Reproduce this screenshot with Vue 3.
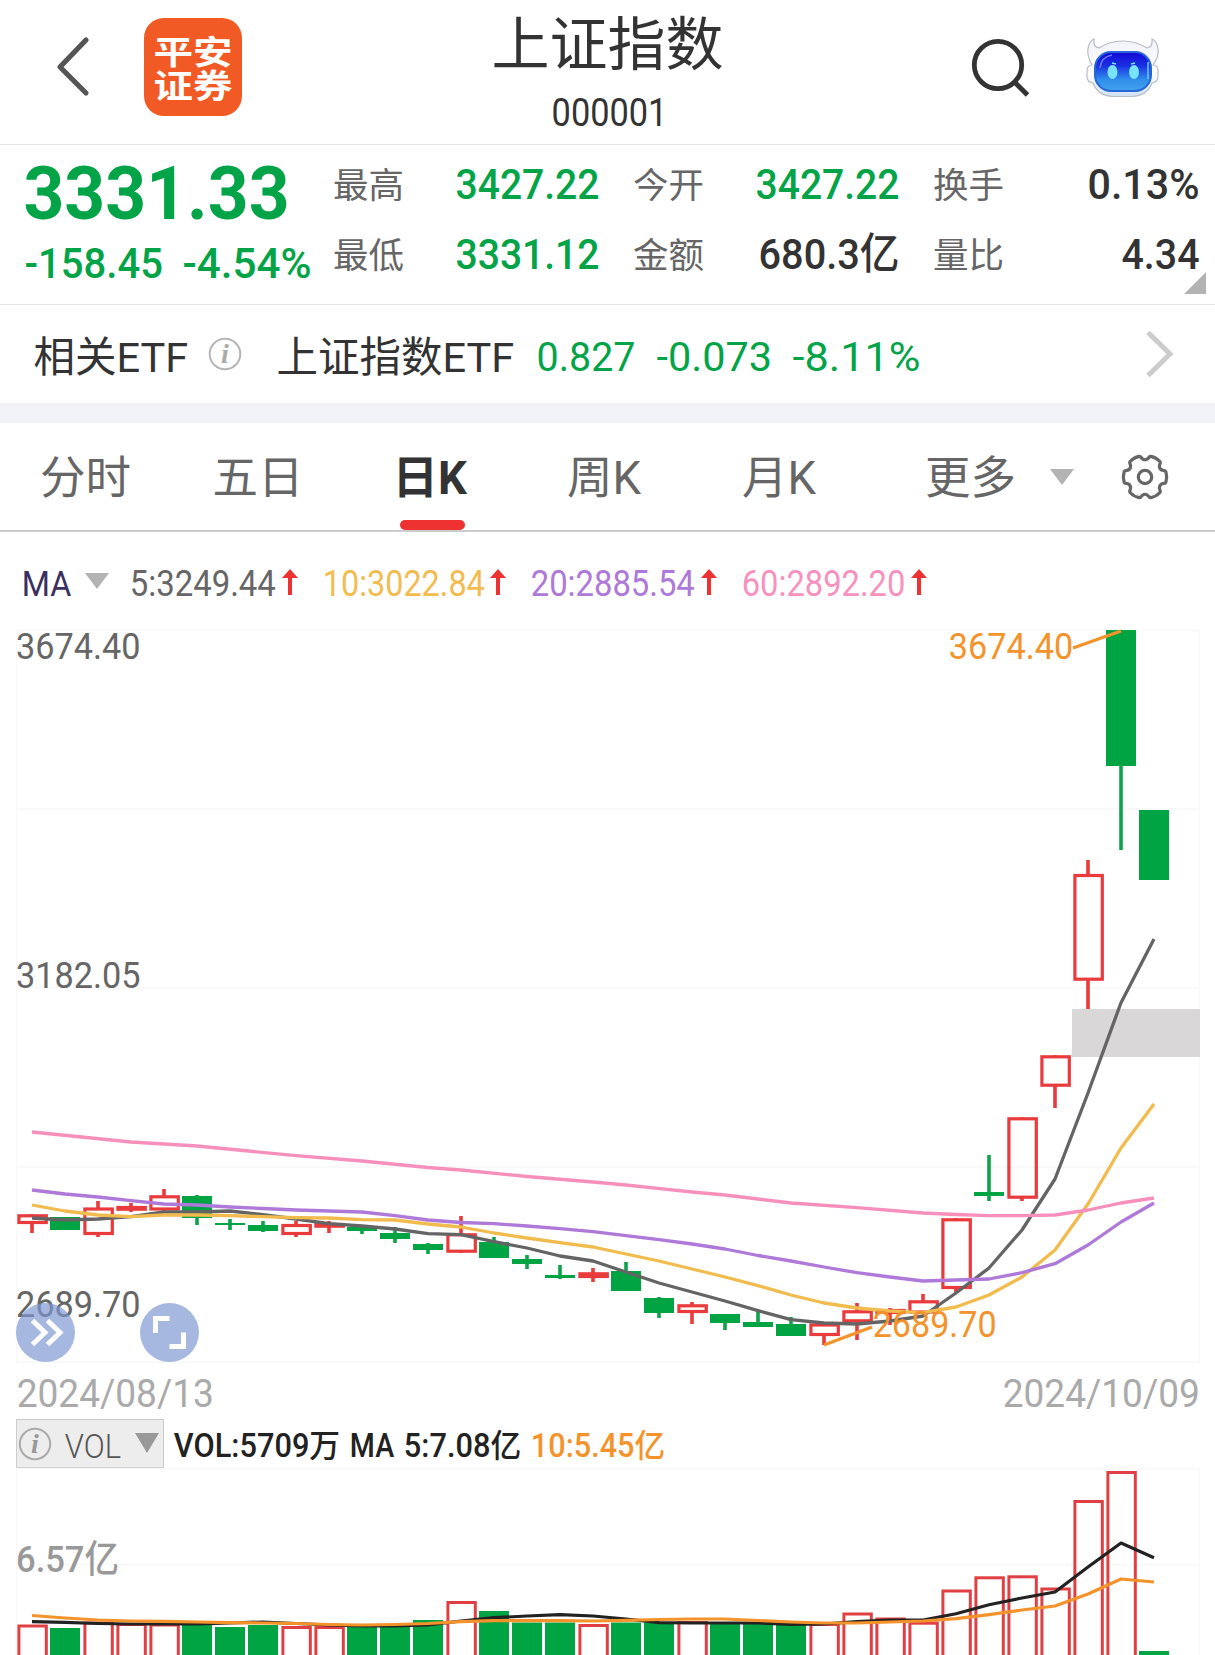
<script setup>

import {h} from "vue";

// Number set to a fixed ink width, baseline at the bottom of its box
const FitText = ({text, w, cap}) => {
  const size = cap / 0.711;
  const pad = size * 0.035;
  return h('svg', {width: w, height: cap, class: 'fit'}, [
    h('text', {
      x: -pad,
      y: cap,
      'font-size': size,
      textLength: w + pad * 2,
      lengthAdjust: 'spacingAndGlyphs',
      fill: 'currentColor'
    }, text)
  ]);
};
FitText.props = ['text', 'w', 'cap'];

const stats = [
  {label: '最高', value: '3427.22', w: 141, green: true},
  {label: '今开', value: '3427.22', w: 141, green: true},
  {label: '换手', value: '0.13%', w: 109},
  {label: '最低', value: '3331.12', w: 141, green: true},
  {label: '金额', value: '680.3亿', w: 138},
  {label: '量比', value: '4.34', w: 75}
];

const tabs = ['分时', '五日', '日K', '周K', '月K', '更多'];
const activeTab = '日K';

const averages = [
  {text: '5:3249.44', w: 143.5, color: '#666666'},
  {text: '10:3022.84', w: 159.5, color: '#f3bc4f'},
  {text: '20:2885.54', w: 161.5, color: '#ae79d8'},
  {text: '60:2892.20', w: 161, color: '#f792be'}
];

// up, body top, body bottom, wick top, wick bottom
const candles = [
  [1, 1214.3, 1224, 1214.3, 1233],
  [0, 1217, 1230, 1217, 1230],
  [1, 1207.5, 1235, 1201, 1237],
  [1, 1206, 1210.7, 1203, 1212],
  [1, 1195.3, 1210.5, 1189, 1210.5],
  [0, 1196, 1218, 1195, 1225],
  [0, 1223, 1225, 1219, 1230],
  [0, 1225, 1231, 1221, 1232],
  [1, 1224, 1235, 1221, 1237],
  [1, 1223, 1227.7, 1221, 1233],
  [0, 1227, 1231, 1226, 1234],
  [0, 1233, 1239, 1227, 1243],
  [0, 1244, 1250, 1243, 1254],
  [1, 1233.3, 1252.7, 1216, 1253],
  [0, 1242, 1258, 1237, 1258],
  [0, 1259, 1264, 1255, 1269],
  [0, 1275, 1278, 1265, 1279],
  [1, 1272.3, 1278, 1268, 1282],
  [0, 1271, 1291, 1262, 1291],
  [0, 1298, 1313, 1297, 1318],
  [1, 1304.3, 1313, 1302, 1324],
  [0, 1314, 1323, 1314, 1330],
  [0, 1322, 1327, 1312, 1327],
  [0, 1324, 1336, 1317, 1336],
  [1, 1323.5, 1336, 1323.5, 1345],
  [1, 1310.3, 1322.3, 1303, 1340],
  [1, 1309, 1314, 1308, 1325],
  [1, 1300.3, 1313.5, 1294, 1313.5],
  [1, 1218.3, 1289, 1218.3, 1293],
  [0, 1192, 1196, 1155, 1201],
  [1, 1117.3, 1198.7, 1117.3, 1201],
  [1, 1055.3, 1086.7, 1055.3, 1108],
  [1, 874, 980.7, 860, 1009],
  [0, 630, 766, 630, 850],
  [0, 810, 880, 810, 880]
].map(([up, top, bottom, high, low], i) => ({up, top, bottom, high, low, x: 32 + i * 33}));

const volumeTops = [
  1624.5, 1628, 1621.5, 1623, 1623.5, 1624, 1627, 1625, 1626, 1626, 1627, 1627,
  1620, 1601, 1611, 1622.5, 1622.5, 1624, 1622.5, 1622.5, 1621, 1624, 1624, 1624,
  1623, 1612.5, 1617.5, 1621.7, 1589.5, 1576.3, 1575.3, 1587.5, 1500, 1471, 1651
];
// the volume colour differs from the candle on two days
const volumes = volumeTops.map((top, i) => ({top, x: 32 + i * 33, up: candles[i].up || i === 29 || i === 33}));

const toPoints = (ys) => ys.map((y, i) => `${32 + i * 33},${y}`).join(' ');

const ma60 = '32,1132 131,1142 197,1146 296,1155.7 362,1161 428,1167.5 461,1170 527,1176.5 593,1182 626,1185 660,1188.7 692,1192 725,1195 758,1199 791,1203 857,1207.7 923,1213 956,1214.5 989,1215.7 1022,1215.7 1055,1215 1088,1210 1121,1203 1154,1198';
const ma20 = toPoints([
  1190, 1194, 1197, 1200.7, 1204, 1205, 1207, 1208.5, 1210, 1211, 1212, 1215.7,
  1220, 1222.5, 1223.7, 1226, 1228.7, 1231.7, 1235.7, 1239.7, 1244, 1249, 1255.5, 1261,
  1267, 1272.7, 1277, 1281, 1280, 1279, 1272.7, 1263.7, 1245, 1222, 1203
]);
const ma10 = toPoints([
  1205, 1211, 1215, 1216.7, 1215, 1215, 1215.7, 1216.7, 1217.7, 1218, 1219.7, 1220,
  1224, 1227, 1233, 1238, 1242.7, 1247, 1254, 1261, 1269, 1277, 1285.7, 1295,
  1303, 1308, 1311, 1312.7, 1307, 1295, 1277, 1250, 1204, 1148, 1104
]);
const ma5 = toPoints([
  1218, 1220, 1219, 1216.7, 1212, 1212, 1211, 1214.7, 1219, 1223.7, 1226, 1229,
  1233.7, 1234.7, 1241.7, 1248, 1256, 1261, 1272, 1283, 1292, 1301, 1310.7, 1319.7,
  1323, 1324, 1321, 1316, 1293, 1268, 1230, 1179, 1093, 1002.7, 939
]);
const volMa5 = toPoints([
  1621.7, 1622.3, 1623.5, 1624, 1624, 1624, 1623, 1622, 1623.5, 1625, 1626, 1626,
  1625, 1621, 1617.7, 1616, 1614.7, 1616, 1619, 1622.7, 1623, 1623, 1623, 1624.5,
  1624, 1621.7, 1620, 1620, 1613.7, 1604.7, 1598, 1592, 1567, 1543, 1557.7
]);
const volMa10 = toPoints([
  1615.5, 1618, 1620, 1621, 1621.3, 1622, 1622.7, 1623, 1623.5, 1624.5, 1625, 1624.5,
  1623.5, 1621.7, 1620.7, 1620.7, 1620.7, 1621, 1620.3, 1619.5, 1619, 1619, 1620.5, 1622,
  1623, 1623, 1622, 1621, 1618.7, 1614.7, 1610, 1606, 1594, 1579, 1582
]);

const polar = (r, deg) => {
  const a = deg * Math.PI / 180;
  return `${(24 + r * Math.cos(a)).toFixed(2)} ${(24 + r * Math.sin(a)).toFixed(2)}`;
};
const gear = 'M' + polar(21.5, -14) + [0, 60, 120, 180, 240, 300].map(a =>
    ` Q${polar(22.5, a)} ${polar(21.5, a + 14)} L${polar(21, a + 17)} Q${polar(14, a + 30)} ${polar(21, a + 43)} L${polar(21.5, a + 46)}`
).join('') + 'Z';

</script>

<template>
  <main class="app">
    <header class="header">
      <div class="side">
        <svg class="back" width="40" height="64" viewBox="0 0 40 64">
          <path d="M33 8 L7 35 L33 61" fill="none" stroke="#555" stroke-width="5.2" stroke-linecap="round" stroke-linejoin="round"/>
        </svg>
        <svg class="logo" width="98" height="98" viewBox="0 0 98 98">
          <rect width="98" height="98" rx="20" fill="#f15a24"/>
          <g fill="#fff" font-size="33" font-weight="700" transform="translate(9.5 0)">
            <text x="0" y="46" textLength="79" lengthAdjust="spacingAndGlyphs">平安</text>
            <text x="0" y="79.5" textLength="79" lengthAdjust="spacingAndGlyphs">证券</text>
          </g>
        </svg>
      </div>
      <div class="title">
        <h1>上证指数</h1>
        <FitText class="code" text="000001" :w="113" :cap="28"/>
      </div>
      <div class="side right">
        <svg width="60" height="62" viewBox="0 0 60 62">
          <circle cx="28" cy="29" r="23.7" fill="none" stroke="#333" stroke-width="4.8"/>
          <path d="M44 45.5 L57.5 59" stroke="#333" stroke-width="5"/>
        </svg>
        <svg class="robot" width="74" height="60" viewBox="0 0 74 60">
          <defs>
            <linearGradient id="face" x1="0" y1="0" x2="0" y2="1">
              <stop offset="0" stop-color="#1208d6"/>
              <stop offset="0.35" stop-color="#1a2fe2"/>
              <stop offset="0.7" stop-color="#2f8dec"/>
              <stop offset="1" stop-color="#45a4ec"/>
            </linearGradient>
            <linearGradient id="shell" x1="0" y1="0" x2="0" y2="1">
              <stop offset="0" stop-color="#f1f2f8"/>
              <stop offset="0.6" stop-color="#ffffff"/>
              <stop offset="1" stop-color="#d0e2f4"/>
            </linearGradient>
          </defs>
          <path d="M8 1 C3 3 0 12 3 20 Q4 24 6 27 Q1 27 1 33 V39 Q1 44 7 45 Q12 58 27 58.5 H46 Q61 58 66 45 Q72 44 72 39 V33 Q72 27 67 27 Q69 24 71 20 C74 12 71 3 66 1 Q67 9 61 10 Q50 3 37 3 Q23 3 13 10 Q7 9 8 1 Z" fill="url(#shell)" stroke="#b9bcc9" stroke-width="1.2"/>
          <rect x="9" y="14" width="56" height="39" rx="16" fill="url(#face)" stroke="#2767d8" stroke-width="2"/>
          <path d="M14 30 Q15 19 26 17" fill="none" stroke="#6974f2" stroke-width="1.6"/>
          <path d="M62 24 V41" stroke="#67c9f3" stroke-width="1.5"/>
          <ellipse cx="26.5" cy="34" rx="5" ry="7" fill="#79e3fb"/>
          <ellipse cx="48" cy="34" rx="5" ry="7" fill="#79e3fb"/>
          <path d="M26 25 l4 1 M45 26 l4 -1" stroke="#79e3fb" stroke-width="1.5"/>
        </svg>
      </div>
    </header>

    <section class="quote">
      <div class="price green">
        <FitText class="bold" text="3331.33" :w="261" :cap="53"/>
        <div class="change">
          <FitText class="medium" text="-158.45" :w="135.5" :cap="30.5"/>
          <FitText class="medium" text="-4.54%" :w="126" :cap="30.5"/>
        </div>
      </div>
      <div class="stats">
        <div v-for="stat in stats" :key="stat.label" class="stat">
          <span>{{ stat.label }}</span>
          <FitText class="medium" :class="{green: stat.green}" :text="stat.value" :w="stat.w" :cap="30.5"/>
        </div>
      </div>
      <i class="corner"></i>
    </section>

    <section class="etf">
      <span>相关ETF</span>
      <svg class="icon" width="34" height="34" viewBox="0 0 34 34">
        <circle cx="17" cy="17" r="15.3" fill="none" stroke="#b5b5b5" stroke-width="2"/>
        <text class="serif" x="17" y="26" font-size="28" text-anchor="middle" fill="#aaa">i</text>
      </svg>
      <span class="name">上证指数ETF</span>
      <div class="numbers green">
        <FitText text="0.827" :w="96" :cap="29.5"/>
        <FitText text="-0.073" :w="112.5" :cap="29.5"/>
        <FitText text="-8.11%" :w="125" :cap="29.5"/>
      </div>
      <svg class="icon more" width="30" height="48" viewBox="0 0 30 48">
        <path d="M4 2.5 L26 24 L4 45.5" fill="none" stroke="#ccc" stroke-width="5"/>
      </svg>
    </section>

    <nav class="tabs">
      <a v-for="tab in tabs" :key="tab" :class="{active: tab === activeTab}"><span>{{ tab }}</span></a>
      <i class="arrow-down"></i>
      <svg width="48" height="48" viewBox="0 0 48 48">
        <path :d="gear" fill="none" stroke="#666" stroke-width="3.2" stroke-linejoin="round"/>
        <circle cx="24" cy="24" r="6.7" fill="none" stroke="#666" stroke-width="3.2"/>
      </svg>
    </nav>

    <section class="averages">
      <FitText class="ma" text="MA" :w="47" :cap="25.5"/>
      <i class="arrow-down"></i>
      <div v-for="item in averages" :key="item.text" class="average" :style="{color: item.color}">
        <FitText :text="item.text" :w="item.w" :cap="26.5"/>
        <svg width="16" height="26" viewBox="0 0 16 26">
          <path d="M8 0 L16 9 H10 V26 H6 V9 H0 Z" fill="#ee3131"/>
        </svg>
      </div>
    </section>

    <svg class="chart" width="1215" height="750" viewBox="0 620 1215 750">
      <g fill="none" stroke="#f8f8f8" stroke-width="1.5">
        <rect x="16.5" y="630.5" width="1183" height="731.5"/>
        <path d="M16 809 H1200 M16 988 H1200 M16 1167 H1200"/>
      </g>
      <rect x="1072" y="1009" width="128" height="48" fill="#d9d7d8"/>
      <g v-for="c in candles" :key="c.x">
        <template v-if="c.up">
          <path :d="`M${c.x} ${c.high} V${c.top + 1} M${c.x} ${c.bottom - 1} V${c.low}`" stroke="#e93a3c" stroke-width="3.6"/>
          <rect :x="c.x - 13.1" :y="c.top + 1.5" width="27.4" :height="c.bottom - c.top - 3" fill="none" stroke="#e93a3c" stroke-width="3.2"/>
        </template>
        <template v-else>
          <path :d="`M${c.x} ${c.high} V${c.low}`" stroke="#0da34b" stroke-width="3.6"/>
          <rect :x="c.x - 15" :y="c.top" width="30" :height="c.bottom - c.top" fill="#00a443"/>
        </template>
      </g>
      <g fill="none" stroke-width="3.3" stroke-linejoin="round">
        <polyline :points="ma5" stroke="#646464"/>
        <polyline :points="ma10" stroke="#f1bb4d"/>
        <polyline :points="ma20" stroke="#ae79d8"/>
        <polyline :points="ma60" stroke="#f78fbd"/>
        <path d="M1073 648 L1121 631 M824 1345 L872 1327" stroke="#f4932b"/>
      </g>
      <g font-size="37.5" fill="#666">
        <text x="16" y="658.5" textLength="124.5" lengthAdjust="spacingAndGlyphs">3674.40</text>
        <text x="16" y="987.5" textLength="124.5" lengthAdjust="spacingAndGlyphs">3182.05</text>
        <text x="16" y="1316.5" textLength="124.5" lengthAdjust="spacingAndGlyphs">2689.70</text>
      </g>
      <g font-size="37.5" fill="#f4932b">
        <text x="948.7" y="658.5" textLength="124.5" lengthAdjust="spacingAndGlyphs">3674.40</text>
        <text x="872.7" y="1336.5" textLength="124" lengthAdjust="spacingAndGlyphs">2689.70</text>
      </g>
      <g fill="#7e96d2" fill-opacity="0.68">
        <circle cx="45.5" cy="1332.5" r="29.5"/>
        <circle cx="169.5" cy="1332.5" r="29.5"/>
      </g>
      <g fill="none" stroke="#fff" stroke-width="5">
        <path d="M32.5 1320.5 L45 1332.5 L32.5 1344.5 M47.5 1320.5 L60 1332.5 L47.5 1344.5"/>
        <path d="M155.5 1333 V1318.5 H169.5 M183.5 1332.5 V1346.5 H169.5"/>
      </g>
    </svg>

    <div class="dates">
      <FitText text="2024/08/13" :w="194.5" :cap="27.5"/>
      <FitText text="2024/10/09" :w="194.5" :cap="27.5"/>
    </div>

    <section class="volume">
      <div class="picker">
        <svg width="34" height="34" viewBox="0 0 34 34">
          <circle cx="17" cy="17" r="15.2" fill="none" stroke="#aaa" stroke-width="2"/>
          <text class="serif" x="17" y="26" font-size="28" text-anchor="middle" fill="#999">i</text>
        </svg>
        <FitText class="light vol" text="VOL" :w="54" :cap="23.5"/>
        <i class="arrow-down"></i>
      </div>
      <FitText class="medium" text="VOL:5709万" :w="164" :cap="23"/>
      <FitText class="medium" text="MA" :w="42" :cap="23"/>
      <FitText class="medium" text="5:7.08亿" :w="115" :cap="23"/>
      <FitText class="medium orange" text="10:5.45亿" :w="132" :cap="23"/>
    </section>

    <svg class="chart" width="1215" height="187" viewBox="0 1468 1215 187">
      <g fill="none" stroke="#f8f8f8" stroke-width="1.5">
        <rect x="16.5" y="1468.7" width="1183" height="200"/>
        <path d="M16 1564.5 H1200"/>
      </g>
      <text x="16" y="1571.5" font-size="37.5" font-weight="500" fill="#999" textLength="103" lengthAdjust="spacingAndGlyphs">6.57亿</text>
      <g v-for="v in volumes" :key="v.x">
        <rect v-if="v.up" :x="v.x - 13.1" :y="v.top + 1.5" width="27.4" height="240" fill="none" stroke="#e04043" stroke-width="3"/>
        <rect v-else :x="v.x - 15" :y="v.top" width="30" height="240" fill="#00a443"/>
      </g>
      <g fill="none" stroke-width="3.2" stroke-linejoin="round">
        <polyline :points="volMa5" stroke="#222"/>
        <polyline :points="volMa10" stroke="#f4932b"/>
      </g>
    </svg>
  </main>
</template>

<style>
body {
  margin: 0;
  background: #fff;
}
</style>

<style scoped>

.app {
  width: 1215px;
  height: 1655px;
  overflow: hidden;
  display: flex;
  flex-direction: column;
  background: #fff;
  color: #333;
  font-family: Roboto, "Noto Sans CJK SC", sans-serif;
}

.app > * {
  flex-shrink: 0;
  box-sizing: border-box;
}

svg {
  display: block;
  flex-shrink: 0;
  overflow: visible;
}

.green {
  color: #03a348;
}

.bold {
  font-weight: 700;
}

.medium {
  font-weight: 500;
}

.light {
  font-weight: 300;
}

.orange {
  color: #f4932b;
}

.serif {
  font-family: "Liberation Serif", serif;
  font-style: italic;
  font-weight: 700;
}

.header {
  height: 145px;
  display: grid;
  grid-template-columns: 1fr 240px 1fr;
  border-bottom: 1px solid #e6e6e6;
}

.side {
  display: flex;
  align-items: flex-start;
}

.back {
  margin: 32px 0 0 53px;
}

.logo {
  margin: 18px 0 0 51px;
}

.title {
  display: flex;
  flex-direction: column;
  align-items: center;
  gap: 24px;
  padding-top: 15.5px;
}

.title h1 {
  margin: 0;
  font-size: 58px;
  font-weight: 400;
  line-height: 58px;
}

.code {
  margin-left: 4px;
}

.right {
  justify-content: flex-end;
  padding: 36px 55px 0 0;
  gap: 56px;
}

.robot {
  margin-top: 2px;
}

.quote {
  position: relative;
  height: 160px;
  display: flex;
  border-bottom: 1px solid #e6e6e6;
}

.price {
  width: 307px;
  padding: 20.5px 0 0 26px;
}

.change {
  display: flex;
  gap: 22px;
  margin-top: 28.5px;
}

.stats {
  width: 866px;
  height: 140px;
  padding-top: 3.5px;
  display: grid;
  grid-template-columns: repeat(3, 265px);
  grid-template-rows: 70px 70px;
  column-gap: 35px;
}

.stat {
  display: flex;
  align-items: center;
  justify-content: space-between;
}

.stat span {
  padding-top: 5px;
  font-size: 35.5px;
  line-height: 36px;
  color: #666;
}

.corner {
  position: absolute;
  right: 9px;
  bottom: 10px;
  border-left: 22px solid transparent;
  border-bottom: 22px solid #b3b3b3;
}

.etf {
  height: 118px;
  display: flex;
  align-items: center;
  padding: 3px 41px 0 33.5px;
  border-bottom: 20px solid #f2f3f6;
  font-size: 41.5px;
  line-height: 42px;
}

.etf span {
  width: 157px;
  padding-top: 4px;
  white-space: nowrap;
}

.etf .icon {
  margin: 0 0 4px 17px;
}

.etf .name {
  width: 240px;
  margin-left: 35px;
}

.numbers {
  display: flex;
  gap: 24px;
  margin-left: 21px;
}

.etf .more {
  margin-left: auto;
}

.tabs {
  height: 109px;
  display: grid;
  grid-template-columns: 172.5px 180px 174.5px 175px 183px 125px 71px 48px;
  align-items: center;
  padding-left: 40px;
  border-bottom: 2px solid #ccc;
  font-size: 45.5px;
  color: #666;
}

.tabs a {
  position: relative;
  height: 107px;
}

.tabs span {
  display: block;
  padding-top: 2px;
  line-height: 107px;
}

.tabs .active {
  color: #333;
  font-weight: 700;
}

.tabs .active::after {
  content: "";
  position: absolute;
  left: 7px;
  bottom: 0;
  width: 65px;
  height: 10px;
  border-radius: 5px;
  background: #ee3131;
}

.arrow-down {
  width: 0;
  height: 0;
  border-left: 12.5px solid transparent;
  border-right: 12.5px solid transparent;
  border-top: 16px solid #b3b3b3;
}

.averages {
  height: 88px;
  display: flex;
  align-items: center;
  padding: 12px 0 0 23px;
}

.averages .arrow-down {
  margin: -2px 22px 0 15px;
}

.ma {
  margin-top: 2px;
  color: #3a2f5f;
}

.average {
  display: flex;
  align-items: center;
  gap: 7px;
  margin-right: 26px;
}

.dates {
  height: 49px;
  display: flex;
  justify-content: space-between;
  padding: 9px 17px 0 17.5px;
  color: #aaa;
}

.volume {
  height: 49px;
  display: flex;
  align-items: center;
  gap: 12px;
  padding-left: 16px;
  color: #222;
}

.volume > .fit {
  margin-top: 3px;
}

.picker {
  box-sizing: border-box;
  width: 148px;
  height: 49px;
  display: flex;
  align-items: center;
  gap: 13px;
  padding-left: 1px;
  margin-right: -1px;
  border: 1px solid #ccc;
  background: #ededed;
  color: #555;
}

.vol {
  margin: 4px 0 0 1px;
}

.picker .arrow-down {
  border-top: 20px solid #999;
  margin: -2px 0 0 2px;
}
</style>
